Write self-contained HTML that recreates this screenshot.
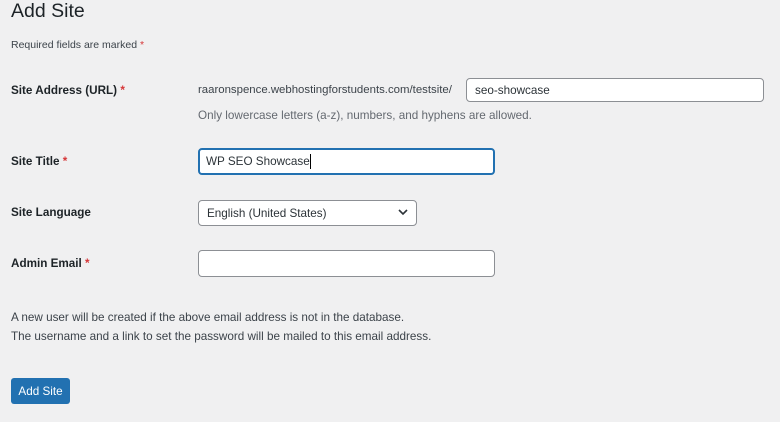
<!DOCTYPE html>
<html><head><meta charset="utf-8"><style>
body{margin:0;width:780px;height:422px;background:#f0f0f1;font-family:"Liberation Sans",sans-serif;color:#3c434a;font-size:11.7px;position:relative;overflow:hidden}
.a{position:absolute;white-space:nowrap}
h1{position:absolute;left:11px;top:0px;margin:0;font-size:19.5px;font-weight:400;color:#1d2327}
.lb{font-weight:bold;color:#1d2327;font-size:11.7px}
.r{color:#d63638}
.in{position:absolute;background:#fff;border:1px solid #8c8f94;border-radius:4px;box-sizing:border-box;font-size:11.7px;color:#2c3338;padding-left:8px;display:flex;align-items:center}
.btn{position:absolute;left:11px;top:378px;width:59px;height:26px;background:#2271b1;border-radius:3px;color:#fff;font-size:11.7px;display:flex;align-items:center;justify-content:center}
</style></head><body>
<h1>Add Site</h1>
<div class="a" style="left:11px;top:39px;font-size:10.5px">Required fields are marked <span class="r">*</span></div>
<div class="a lb" style="left:11px;top:84px">Site Address (URL) <span class="r">*</span></div>
<div class="a" style="left:198px;top:84px;font-size:11.4px">raaronspence.webhostingforstudents.com/testsite/</div>
<div class="in" style="left:466px;top:78px;width:298px;height:24px">seo-showcase</div>
<div class="a" style="left:198px;top:109px;color:#646970">Only lowercase letters (a-z), numbers, and hyphens are allowed.</div>
<div class="a lb" style="left:11px;top:155px">Site Title <span class="r">*</span></div>
<div class="in" style="left:198px;top:148px;width:297px;height:27px;border:2px solid #2271b1;padding-left:6px">WP SEO Showcase<span style="display:inline-block;width:1px;height:15px;background:#000"></span></div>
<div class="a lb" style="left:11px;top:206px">Site Language</div>
<div class="in" style="left:198px;top:200px;width:219px;height:26px">English (United States)
<svg style="position:absolute;right:8px;top:8px" width="10" height="7" viewBox="0 0 10 7"><path d="M1 1l4 4 4-4" fill="none" stroke="#2c3338" stroke-width="1.6"/></svg></div>
<div class="a lb" style="left:11px;top:257px">Admin Email <span class="r">*</span></div>
<div class="in" style="left:198px;top:250px;width:297px;height:27px"></div>
<div class="a" style="left:11px;top:311px">A new user will be created if the above email address is not in the database.</div>
<div class="a" style="left:11px;top:330px">The username and a link to set the password will be mailed to this email address.</div>
<div class="btn">Add Site</div>
</body></html>
